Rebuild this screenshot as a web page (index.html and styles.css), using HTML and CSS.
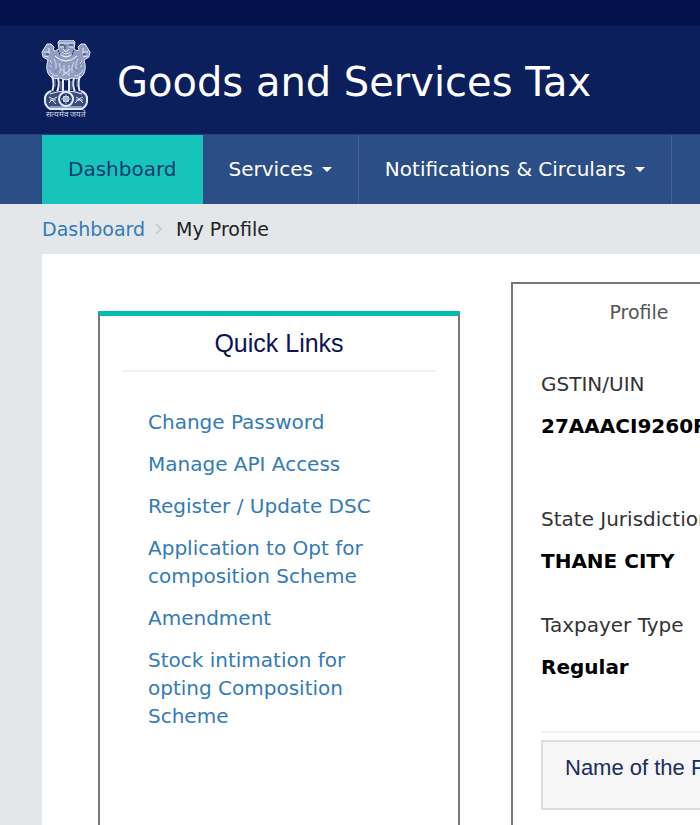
FILE: index.html
```html
<!DOCTYPE html>
<html lang="en">
<head>
    <title>Goods and Services Tax - My Profile</title>
    <meta charset="UTF-8">
    <meta name="viewport" content="width=device-width, initial-scale=1.0">
    <link rel="stylesheet" href="styles.css">
</head>
<body>
    <div class="top-strip"></div>

    <header class="header">
        <div class="emblem">
            <svg width="50" height="70" viewBox="0 0 50 70" fill="none" stroke="#e4e9f7" aria-hidden="true">
                <!-- lions -->
                <path d="M17 2L19 0H32L34 2L33 9Q36 12 38 10L37 7L40 4H44L49 12L48 17L43 20Q46 29 42 35Q38 40 31 38L25 40L19 38Q12 40 8 35Q4 29 7 20L2 17L1 12L6 4H10L13 7L12 10Q14 12 18 9Z" fill="#8f9cc0" stroke-width="1"/>
                <path d="M18 3h15M19 7h4M28 7h4M22 9l3 3 3-3M21 12q4 4 8 0M3 12h5M8 8v6M42 12h5M42 8v6M3 16l5 1M47 16l-5 1" stroke-width="1"/>
                <path d="M17 12q8 10 16 0M14 16q11 10 22 0" stroke="#fff" stroke-width="1"/>
                <path d="M9 20q2 3 1 7M13 19q3 4 2 10M18 23q2 3 1 10M23 25v10M28 25v10M33 22q-3 4-2 11M37 19q-3 4-2 10M41 20q-2 3-1 7M8 30q3 6 9 6M42 30q-3 6-9 6M20 29l9 7M30 29l-9 7" stroke="#d4dbed" stroke-width="1"/>
                <path d="M9 23l4 4M37 27l4-4M13 32l5-4M32 28l5 4" stroke="#6e7dab" stroke-width="1"/>
                <path d="M19 5h4M28 5h4M24 5v4M5 14h3M42 14h3M17 10l2 5M33 10l-2 5" stroke="#27386f" stroke-width="1"/>
                <!-- legs -->
                <path d="M11 36q3 8 0 16M17 38q2 7-1 14M22 39v13M28 39v13M33 38q-2 7 1 14M39 36q-3 8 0 16" stroke-width="2"/>
                <path d="M14 39v8M20 41v9M30 41v9M36 39v8" stroke="#8190ba" stroke-width="1"/>
                <!-- abacus and wheel -->
                <path d="M10 51Q3 54 4 60Q3 65 9 69H41Q47 65 46 60Q47 54 40 51" fill="#3a4b82" stroke-width="2"/>
                <path d="M9 54q8-3 16-3t16 3M9 67h32" stroke-width="1"/>
                <circle cx="25" cy="59" r="7" fill="#27386f" stroke-width="2"/>
                <circle cx="25" cy="59" r="3" fill="#b5c0dc" stroke-width="1"/>
                <path d="M25 54v10M20 59h10M22 56l6 6M28 56l-6 6" stroke="#a6b2d3" stroke-width="1"/>
                <path d="M8 57l4 2 4-2M8 63l3-3 4 4M34 63l4-4 4 4M35 57l3 2 4-2M9 60h6M35 60h7" stroke-width="1"/>
            </svg>
            <span class="motto" lang="hi">सत्यमेव जयते</span>
        </div>
        <h1>Goods and Services Tax</h1>
    </header>

    <nav class="main-nav">
        <a href="#" class="nav-item active">Dashboard</a>
        <a href="#" class="nav-item">Services <span class="caret"></span></a>
        <a href="#" class="nav-item">Notifications &amp; Circulars <span class="caret"></span></a>
    </nav>

    <div class="breadcrumb">
        <a href="#">Dashboard</a>
        <svg width="8" height="12" viewBox="0 0 8 12" aria-hidden="true"><path d="M1 1l5 5-5 5" fill="none" stroke="#cccfd2" stroke-width="2"/></svg>
        <span>My Profile</span>
    </div>

    <main class="content">
        <aside class="quick-links">
            <h2>Quick Links</h2>
            <ul>
                <li><a href="#">Change Password</a></li>
                <li><a href="#">Manage API Access</a></li>
                <li><a href="#">Register / Update DSC</a></li>
                <li><a href="#">Application to Opt for composition Scheme</a></li>
                <li><a href="#">Amendment</a></li>
                <li><a href="#">Stock intimation for opting Composition Scheme</a></li>
            </ul>
        </aside>

        <section class="profile">
            <a href="#" class="tab">Profile</a>
            <dl class="fields">
                <div class="field tall">
                    <dt>GSTIN/UIN</dt>
                    <dd>27AAACI9260R</dd>
                </div>
                <div class="field">
                    <dt>State Jurisdiction</dt>
                    <dd>THANE CITY</dd>
                </div>
                <div class="field">
                    <dt>Taxpayer Type</dt>
                    <dd>Regular</dd>
                </div>
            </dl>
            <div class="name-box">Name of the Proprietor</div>
        </section>
    </main>
</body>
</html>
```

FILE: styles.css
```css
* {
    box-sizing: border-box;
}

body {
    margin: 0;
    min-height: 100vh;
    display: flex;
    flex-direction: column;
    font-family: Verdana, "DejaVu Sans", sans-serif;
    font-size: 20px;
    line-height: 28px;
    color: #333;
    background: #e4e7ea;
    overflow: hidden;
}

a {
    color: #337ab7;
    text-decoration: none;
}

.top-strip {
    height: 26px;
    background: #03124a;
}

.header {
    display: flex;
    align-items: center;
    gap: 26px;
    height: 108px;
    padding-left: 41px;
    background: #0b1f5c;
}

.header h1 {
    margin: 0;
    padding-top: 4px;
    font-size: 40px;
    font-weight: normal;
    line-height: 48px;
    color: #fff;
    white-space: nowrap;
}

.emblem {
    display: flex;
    flex-direction: column;
    align-items: center;
    width: 50px;
}

.emblem svg {
    display: block;
}

.motto {
    font-size: 8px;
    line-height: 10px;
    color: #d4dbed;
    white-space: nowrap;
}

.main-nav {
    display: flex;
    height: 70px;
    padding-left: 42px;
    background: #2c4e86;
    border-top: 1px solid #23427a;
}

.nav-item {
    display: flex;
    align-items: center;
    gap: 9px;
    padding: 0 26px 2px;
    color: #fff;
    white-space: nowrap;
    border-right: 1px solid #495f8e;
}

.nav-item.active {
    color: #0b3b6f;
    background: #17c4bb;
    border-right: none;
}

.caret {
    margin-top: 2px;
    border-top: 5px solid #fff;
    border-left: 5px solid transparent;
    border-right: 5px solid transparent;
}

.breadcrumb {
    display: flex;
    align-items: center;
    height: 50px;
    padding-left: 42px;
    font-size: 19px;
}

.breadcrumb svg {
    margin: 0 13px 0 10px;
}

.breadcrumb span {
    color: #222;
}

.content {
    flex: 1;
    display: flex;
    align-items: stretch;
    gap: 51px;
    margin-left: 42px;
    padding: 28px 0 0 56px;
    background: #fff;
}

.quick-links {
    flex: 0 0 362px;
    margin-top: 29px;
    padding: 0 22px;
    border: 2px solid #777;
    border-top: 5px solid #00beb2;
    border-bottom: none;
}

.quick-links h2 {
    margin: 0;
    padding: 12px 0;
    font-family: "Liberation Sans", Arial, sans-serif;
    font-size: 25px;
    font-weight: normal;
    line-height: 30px;
    text-align: center;
    color: #0b1452;
    border-bottom: 2px solid #f1f1f1;
}

.quick-links ul {
    display: flex;
    flex-direction: column;
    gap: 14px;
    margin: 0;
    padding: 36px 36px 0 26px;
    list-style: none;
}

.profile {
    flex: 1 0 420px;
    border-top: 2px solid #777;
    border-left: 2px solid #777;
}

.tab {
    display: block;
    width: 252px;
    padding: 14px 0;
    font-size: 19px;
    text-align: center;
    color: #555;
}

.fields {
    margin: 30px 0 0 28px;
    padding-bottom: 14px;
    border-bottom: 2px solid #f1f1f1;
}

.field {
    padding-bottom: 36px;
    white-space: nowrap;
}

.field.tall {
    padding-bottom: 65px;
}

.field dd {
    margin: 14px 0 0;
    font-weight: bold;
    color: #000;
}

.name-box {
    margin: 7px 0 0 28px;
    padding: 12px 22px 26px;
    font-family: "Liberation Sans", Arial, sans-serif;
    font-size: 22px;
    color: #1b2c61;
    white-space: nowrap;
    background: #f6f6f6;
    border: 2px solid #ddd;
}
```
